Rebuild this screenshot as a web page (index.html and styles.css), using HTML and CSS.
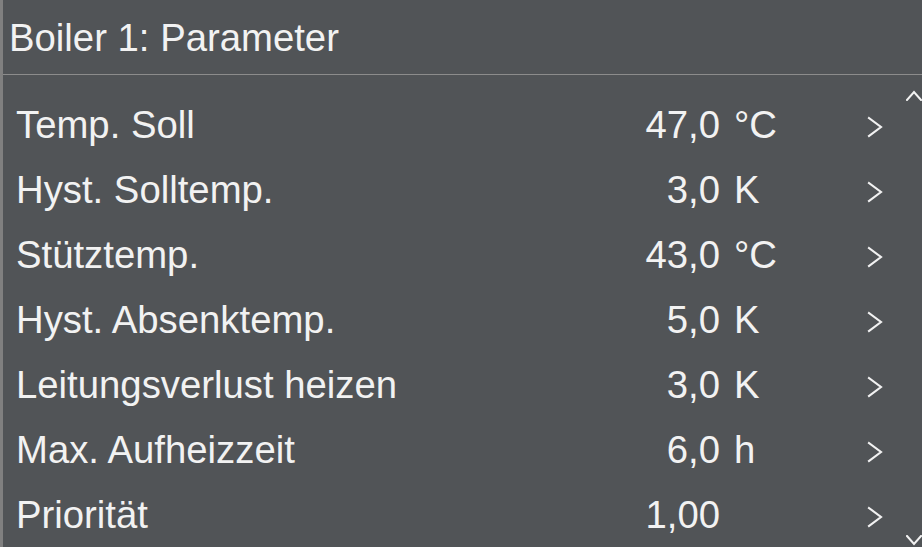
FILE: index.html
```html
<!DOCTYPE html>
<html lang="de">
<head>
<meta charset="utf-8">
<title>Boiler 1: Parameter</title>
<link rel="stylesheet" href="styles.css">
</head>
<body>
<div class="screen">
  <header class="title">Boiler 1: Parameter</header>
  <div class="list">
    <div class="row"><span class="label">Temp. Soll</span><span class="value">47,0</span><span class="unit">°C</span><svg class="chev" viewBox="0 0 16 22"><polyline points="2,2 14,11 2,20"/></svg></div>
    <div class="row"><span class="label">Hyst. Solltemp.</span><span class="value">3,0</span><span class="unit">K</span><svg class="chev" viewBox="0 0 16 22"><polyline points="2,2 14,11 2,20"/></svg></div>
    <div class="row"><span class="label">Stütztemp.</span><span class="value">43,0</span><span class="unit">°C</span><svg class="chev" viewBox="0 0 16 22"><polyline points="2,2 14,11 2,20"/></svg></div>
    <div class="row"><span class="label">Hyst. Absenktemp.</span><span class="value">5,0</span><span class="unit">K</span><svg class="chev" viewBox="0 0 16 22"><polyline points="2,2 14,11 2,20"/></svg></div>
    <div class="row"><span class="label">Leitungsverlust heizen</span><span class="value">3,0</span><span class="unit">K</span><svg class="chev" viewBox="0 0 16 22"><polyline points="2,2 14,11 2,20"/></svg></div>
    <div class="row"><span class="label">Max. Aufheizzeit</span><span class="value">6,0</span><span class="unit">h</span><svg class="chev" viewBox="0 0 16 22"><polyline points="2,2 14,11 2,20"/></svg></div>
    <div class="row"><span class="label">Priorität</span><span class="value">1,00</span><span class="unit"></span><svg class="chev" viewBox="0 0 16 22"><polyline points="2,2 14,11 2,20"/></svg></div>
    <svg class="scroll scroll-up" viewBox="0 0 16 11"><polyline points="1,10 8,2 15,10"/></svg>
    <svg class="scroll scroll-down" viewBox="0 0 16 11"><polyline points="1,1 8,9 15,1"/></svg>
  </div>
</div>
</body>
</html>
```
FILE: styles.css
```css
html, body {
  margin: 0;
  padding: 0;
  background: #515457;
}
.screen {
  width: 922px;
  height: 547px;
  box-sizing: border-box;
  border-left: 3px solid #808080;
  background: #515457;
  color: #f2f2f2;
  font-family: "Liberation Sans", Arial, sans-serif;
  overflow: hidden;
  display: flex;
  flex-direction: column;
}
.title {
  height: 75px;
  box-sizing: border-box;
  border-bottom: 1px solid #8c8c8c;
  padding-left: 6px;
  font-size: 38.3px;
  line-height: 76px;
}
.list {
  position: relative;
  flex: 1;
  padding: 17px 39px 0 13px;
}
.row {
  display: grid;
  grid-template-columns: 594px 110px 147px 16px;
  align-items: center;
  height: 65px;
  font-size: 38.3px;
  white-space: nowrap;
}
.value {
  text-align: right;
}
.unit {
  padding-left: 14px;
}
.chev {
  width: 16px;
  height: 22px;
  margin-top: 4px;
}
.chev polyline, .scroll polyline {
  fill: none;
  stroke: #f2f2f2;
  stroke-width: 2.1;
  stroke-linecap: square;
  stroke-linejoin: miter;
}
.scroll {
  position: absolute;
  right: 0;
  width: 16px;
  height: 11px;
}
.scroll polyline {
  stroke-width: 2;
}
.scroll-up {
  top: 15px;
}
.scroll-down {
  bottom: 1px;
}
```
